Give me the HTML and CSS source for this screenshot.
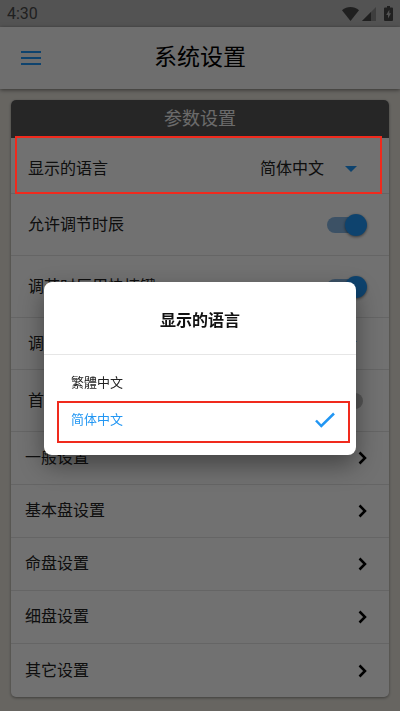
FILE: index.html
```html
<!DOCTYPE html>
<html lang="zh-CN">
<head>
    <meta charset="UTF-8">
    <meta name="viewport" content="width=device-width, initial-scale=1.0">
    <title>系统设置</title>
    <link rel="stylesheet" href="styles.css">
</head>
<body>

<div class="status-bar">
    <span class="time">4:30</span>
    <svg class="wifi" width="17" height="14" viewBox="0 0 17 14"><path d="M8.500 14L0 3.300C5 -1.100 12 -1.100 17 3.300Z"/></svg>
    <svg class="signal" width="14" height="14" viewBox="0 0 14 14"><path d="M0 14L14 0V14Z" opacity="0.400"/><path d="M0 14L9 5V14Z"/></svg>
    <svg width="9" height="15" viewBox="0 0 9 15"><path fill-rule="evenodd" d="M3 0H6V1.500H8Q9 1.500 9 2.500V14Q9 15 8 15H1Q0 15 0 14V2.500Q0 1.500 1 1.500H3ZM5.300 3.800L2.200 9H4V12.600L7 7.300H5.300Z"/></svg>
</div>

<header class="app-bar">
    <button class="menu" aria-label="菜单">
        <svg width="20" height="14" viewBox="0 0 20 14"><path d="M0 1H20M0 7H20M0 13H20"/></svg>
    </button>
    <h1>系统设置</h1>
</header>

<main class="card">
    <h2>参数设置</h2>
    <div class="row language">
        <label for="language">显示的语言</label>
        <div class="picker">
            <select id="language">
                <option>简体中文</option>
            </select>
            <svg width="12" height="6" viewBox="0 0 12 6"><path d="M0 0H12L6 6Z"/></svg>
        </div>
        <span class="mark"></span>
    </div>
    <div class="row tall">
        <label for="adjustHour">允许调节时辰</label>
        <input class="toggle" type="checkbox" id="adjustHour" checked>
    </div>
    <div class="row tall">
        <label for="shortcut">调节时辰用快捷键</label>
        <input class="toggle" type="checkbox" id="shortcut" checked>
    </div>
    <div class="row">
        <label for="unit">调节单位</label>
        <div class="picker">
            <select id="unit">
                <option>时辰</option>
            </select>
            <svg width="12" height="6" viewBox="0 0 12 6"><path d="M0 0H12L6 6Z"/></svg>
        </div>
    </div>
    <div class="row tall">
        <label for="home">首页显示</label>
        <input class="toggle" type="checkbox" id="home">
    </div>
    <a class="row link" href="#">一般设置
        <svg width="9" height="14" viewBox="0 0 9 14"><path d="M1.500 1.500L7 7L1.500 12.500"/></svg>
    </a>
    <a class="row link" href="#">基本盘设置
        <svg width="9" height="14" viewBox="0 0 9 14"><path d="M1.500 1.500L7 7L1.500 12.500"/></svg>
    </a>
    <a class="row link" href="#">命盘设置
        <svg width="9" height="14" viewBox="0 0 9 14"><path d="M1.500 1.500L7 7L1.500 12.500"/></svg>
    </a>
    <a class="row link" href="#">细盘设置
        <svg width="9" height="14" viewBox="0 0 9 14"><path d="M1.500 1.500L7 7L1.500 12.500"/></svg>
    </a>
    <a class="row link" href="#">其它设置
        <svg width="9" height="14" viewBox="0 0 9 14"><path d="M1.500 1.500L7 7L1.500 12.500"/></svg>
    </a>
</main>

<div class="overlay"></div>

<div class="dialog-wrap">
    <div class="dialog" role="dialog" aria-labelledby="dialogTitle">
        <h3 id="dialogTitle">显示的语言</h3>
        <div class="options">
            <label class="option">
                <input type="radio" name="lang">
                <span lang="zh-TW">繁體中文</span>
            </label>
            <label class="option selected">
                <input type="radio" name="lang" checked>
                <span>简体中文</span>
                <svg width="20" height="16" viewBox="0 0 20 16"><path d="M1 8.500L6.300 14L19 1.500"/></svg>
                <span class="mark"></span>
            </label>
        </div>
    </div>
</div>

</body>
</html>
```

FILE: styles.css
```css
* {
    box-sizing: border-box;
}
body {
    margin: 0;
    font-family: Roboto, "Noto Sans CJK SC", sans-serif;
    font-size: 16px;
    line-height: 24px;
    color: #222;
    background-color: #e4e0d8;
}
h1, h2, h3 {
    margin: 0;
    text-align: center;
}
svg {
    flex: none;
}

/* top bars */
.status-bar {
    display: flex;
    align-items: center;
    height: 27px;
    padding: 0 7px;
    background-color: #b8b8b8;
    color: #484848;
    fill: #484848;
}
.time {
    margin-right: auto;
}
.wifi {
    margin-right: 3px;
}
.signal {
    margin-right: 8px;
}
.app-bar {
    display: grid;
    grid-template-columns: 20px 1fr 20px;
    align-items: center;
    height: 62px;
    padding: 0 21px;
    background-color: #f4f4f4;
    box-shadow: 0 1px 4px rgba(0, 0, 0, 0.5);
}
.app-bar h1 {
    font-size: 23px;
    font-weight: 400;
    color: #000;
}
.menu {
    display: flex;
    padding: 0;
    border: none;
    background: none;
    stroke: #2196f3;
    stroke-width: 2;
}

/* settings card */
.card {
    margin: 11px;
    border-radius: 5px;
    background-color: #fbfbfb;
    box-shadow: 0 1px 3px rgba(0, 0, 0, 0.4);
}
.card h2 {
    padding: 7px 0;
    border-radius: 5px 5px 0 0;
    background-color: #555;
    color: #eee;
    font-size: 18px;
    font-weight: 400;
}
.row {
    position: relative;
    display: flex;
    align-items: center;
    justify-content: space-between;
    min-height: 52px;
    padding: 0 22px 0 17px;
    border-bottom: 1px solid #e0e0e0;
}
.language {
    min-height: 56px;
    padding-top: 6px;
}
.tall {
    min-height: 62px;
}
.link {
    min-height: 53px;
    padding-left: 14px;
    color: inherit;
    text-decoration: none;
    fill: none;
    stroke: #000;
}
.link svg {
    stroke-width: 2.5;
}
.row:last-child {
    border-bottom: none;
}
.picker {
    display: flex;
    align-items: center;
    gap: 20px;
    padding-right: 10px;
    fill: #2196f3;
}
select {
    appearance: none;
    padding: 0;
    border: none;
    background: none;
    color: inherit;
    font: inherit;
}
.toggle {
    appearance: none;
    position: relative;
    width: 36px;
    height: 16px;
    margin: 0 4px 0 0;
    border-radius: 8px;
    background-color: #bbb;
}
.toggle::after {
    content: "";
    position: absolute;
    top: -3px;
    left: -4px;
    width: 22px;
    height: 22px;
    border-radius: 50%;
    background-color: #fafafa;
    box-shadow: 0 1px 3px rgba(0, 0, 0, 0.5);
}
.toggle:checked {
    background-color: #85b4e0;
}
.toggle:checked::after {
    left: 18px;
    background-color: #2196f3;
}

/* red frames over the highlighted items */
.mark {
    position: absolute;
    z-index: 2;
    border: 2px solid #f02a1d;
    pointer-events: none;
}
.language .mark {
    inset: -2px 7px -1px 4px;
}
.option .mark {
    inset: 0 6px -5px 13px;
}

/* dialog */
.overlay {
    position: fixed;
    inset: 0;
    z-index: 1;
    background-color: rgba(0, 0, 0, 0.55);
}
.dialog-wrap {
    position: fixed;
    inset: 26px 0 0;
    z-index: 3;
    display: flex;
    align-items: center;
    justify-content: center;
}
.dialog {
    width: 78%;
    border-radius: 8px;
    background-color: #fff;
    box-shadow: 0 10px 24px rgba(0, 0, 0, 0.4);
}
.dialog h3 {
    padding: 27px 0 21px;
    border-bottom: 1px solid #e6e6e6;
    font-size: 16px;
    font-weight: 700;
    color: #111;
}
.options {
    padding: 9px 0 17px;
}
.option {
    position: relative;
    display: flex;
    align-items: center;
    justify-content: space-between;
    height: 37px;
    padding: 0 21px 0 27px;
    font-size: 13px;
}
.option input {
    position: absolute;
    opacity: 0;
}
.selected {
    color: #2196f3;
    fill: none;
}
.selected svg {
    stroke: #2196f3;
    stroke-width: 2.5;
}
```
